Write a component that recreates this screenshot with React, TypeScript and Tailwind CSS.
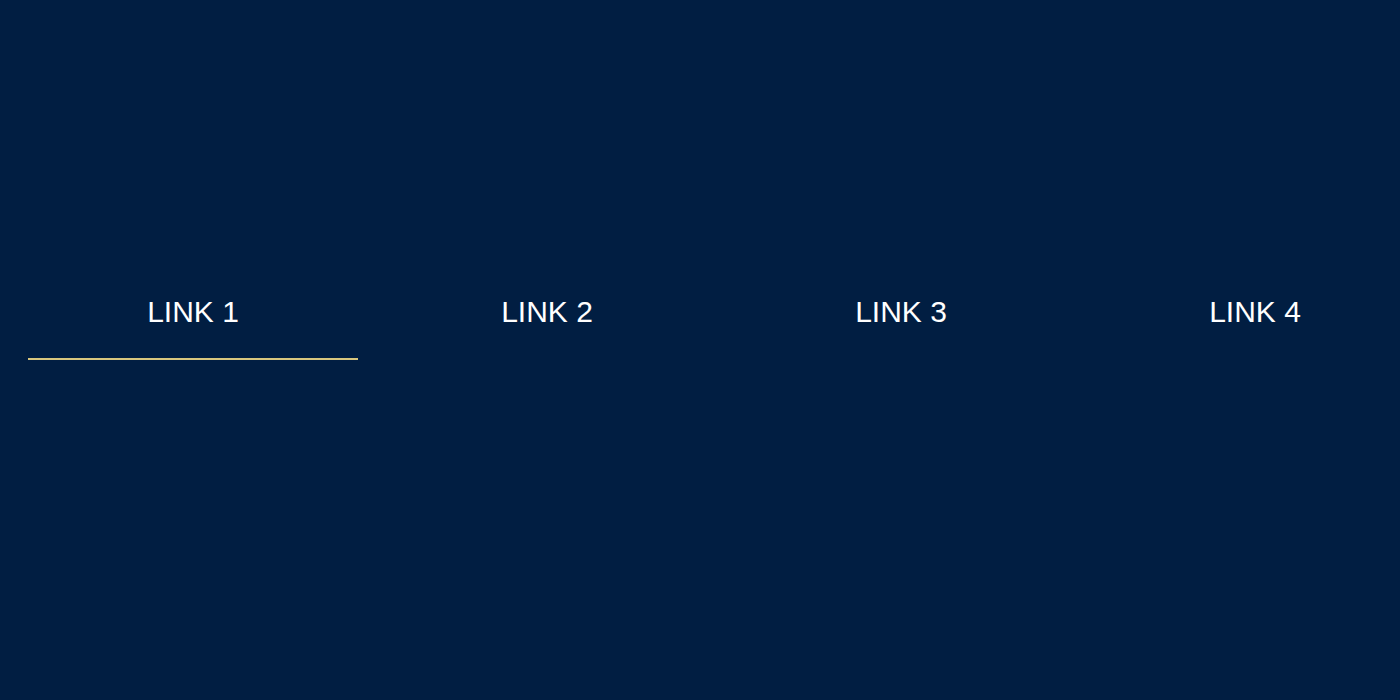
const links = ['LINK 1', 'LINK 2', 'LINK 3', 'LINK 4'];

export default function App() {
  const active = 0;

  return (
    <main className="h-[700px] w-full overflow-hidden bg-[#011e42] font-['Liberation_Sans',Arial,sans-serif]">
      <nav className="flex pl-[16px] pt-[292px]">
        {links.map((label, i) => (
          <a key={label} href="#" className="flex w-[354px] shrink-0 flex-col items-center">
            <span className="text-[30px] leading-[40px] text-white">{label}</span>
            <span
              className={
                i === active
                  ? 'mt-[26px] h-[2px] w-[330px] bg-[#d8c77e]'
                  : 'mt-[26px] h-[2px] w-[330px] bg-transparent'
              }
            />
          </a>
        ))}
      </nav>
    </main>
  );
}
